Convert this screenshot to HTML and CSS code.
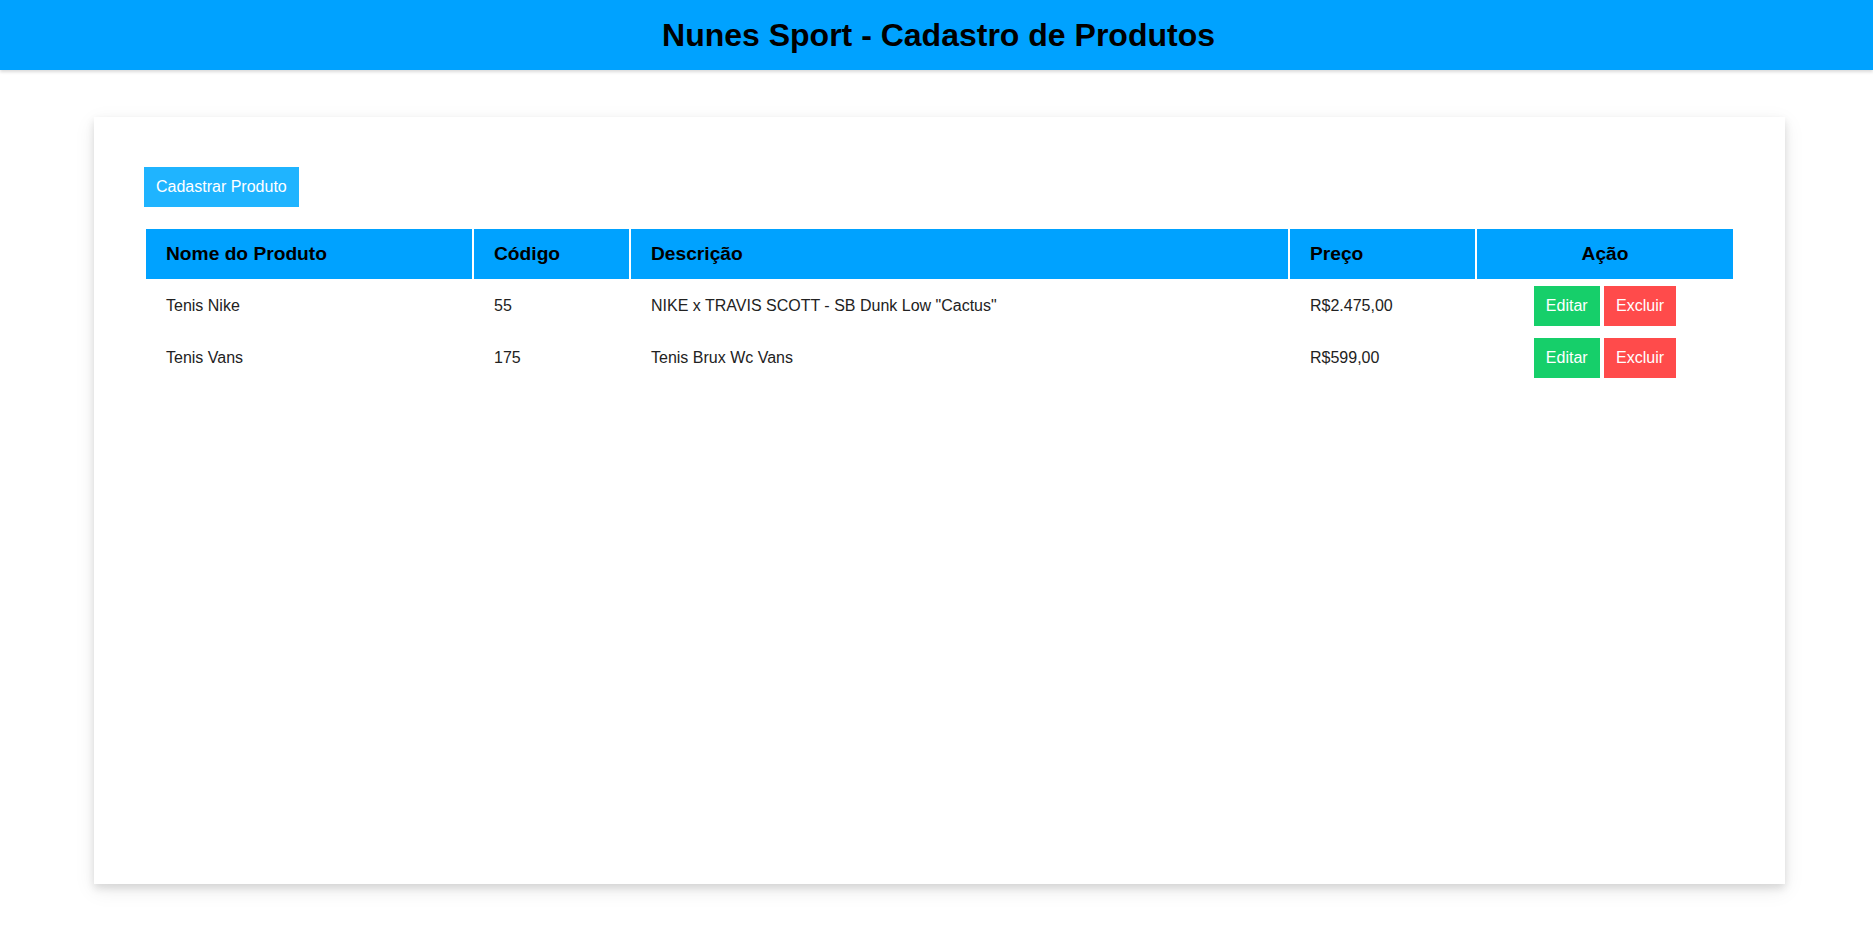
FILE: index.html
```html
<!DOCTYPE html>
<html lang="pt-BR">
<head>
<meta charset="utf-8">
<title>Nunes Sport - Cadastro de Produtos</title>
<link rel="stylesheet" href="styles.css">
</head>
<body>
<header class="topbar">
  <h1 class="title">Nunes Sport - Cadastro de Produtos</h1>
</header>
<main class="page">
  <section class="card">
    <button class="btn btn-add">Cadastrar Produto</button>
    <table class="products">
      <colgroup>
        <col class="c-name">
        <col class="c-code">
        <col class="c-desc">
        <col class="c-price">
        <col class="c-action">
      </colgroup>
      <thead>
        <tr>
          <th>Nome do Produto</th>
          <th>Código</th>
          <th>Descrição</th>
          <th>Preço</th>
          <th class="center">Ação</th>
        </tr>
      </thead>
      <tbody>
        <tr>
          <td>Tenis Nike</td>
          <td>55</td>
          <td>NIKE x TRAVIS SCOTT - SB Dunk Low "Cactus"</td>
          <td>R$2.475,00</td>
          <td class="center"><button class="btn btn-edit">Editar</button> <button class="btn btn-del">Excluir</button></td>
        </tr>
        <tr>
          <td>Tenis Vans</td>
          <td>175</td>
          <td>Tenis Brux Wc Vans</td>
          <td>R$599,00</td>
          <td class="center"><button class="btn btn-edit">Editar</button> <button class="btn btn-del">Excluir</button></td>
        </tr>
      </tbody>
    </table>
  </section>
</main>
</body>
</html>
```
FILE: styles.css
```css
* { box-sizing: border-box; }
body {
  margin: 0;
  font-family: "Liberation Sans", Arial, sans-serif;
  background: #ffffff;
  color: #222;
}
.topbar {
  height: 70px;
  background: #00a2ff;
  display: flex;
  align-items: center;
  justify-content: center;
  box-shadow: 0 2px 3px rgba(0, 0, 0, 0.15);
}
.title {
  margin: 0 0 0 4px;
  font-size: 32px;
  font-weight: bold;
  color: #000;
}
.page {
  padding: 47px 88px 40px 94px;
}
.card {
  height: 767px;
  background: #fff;
  padding: 50px;
  box-shadow: 0 4px 8px 0 rgba(0, 0, 0, 0.12), 0 6px 20px 0 rgba(0, 0, 0, 0.08);
}
.btn {
  border: none;
  height: 40px;
  padding: 0 12px;
  font-family: "Liberation Sans", Arial, sans-serif;
  font-size: 16px;
  color: #fff;
  cursor: pointer;
  vertical-align: middle;
}
.btn-add { background: #1fb4ff; display: block; }
.btn-edit { background: #16cf6a; }
.btn-del { background: #ff4b4b; }
.products {
  width: 100%;
  margin-top: 20px;
  table-layout: fixed;
  border-spacing: 2px;
}
.c-name { width: 326px; }
.c-code { width: 155px; }
.c-desc { width: 657px; }
.c-price { width: 185px; }
.c-action { width: 256px; }
.products th {
  background: #00a2ff;
  color: #000;
  height: 50px;
  padding: 0 20px;
  font-size: 19.2px;
  font-weight: bold;
  text-align: left;
}
.products td {
  height: 50px;
  padding: 0 20px;
  font-size: 16px;
  color: #222;
  vertical-align: middle;
}
.products .center { text-align: center; }
```
